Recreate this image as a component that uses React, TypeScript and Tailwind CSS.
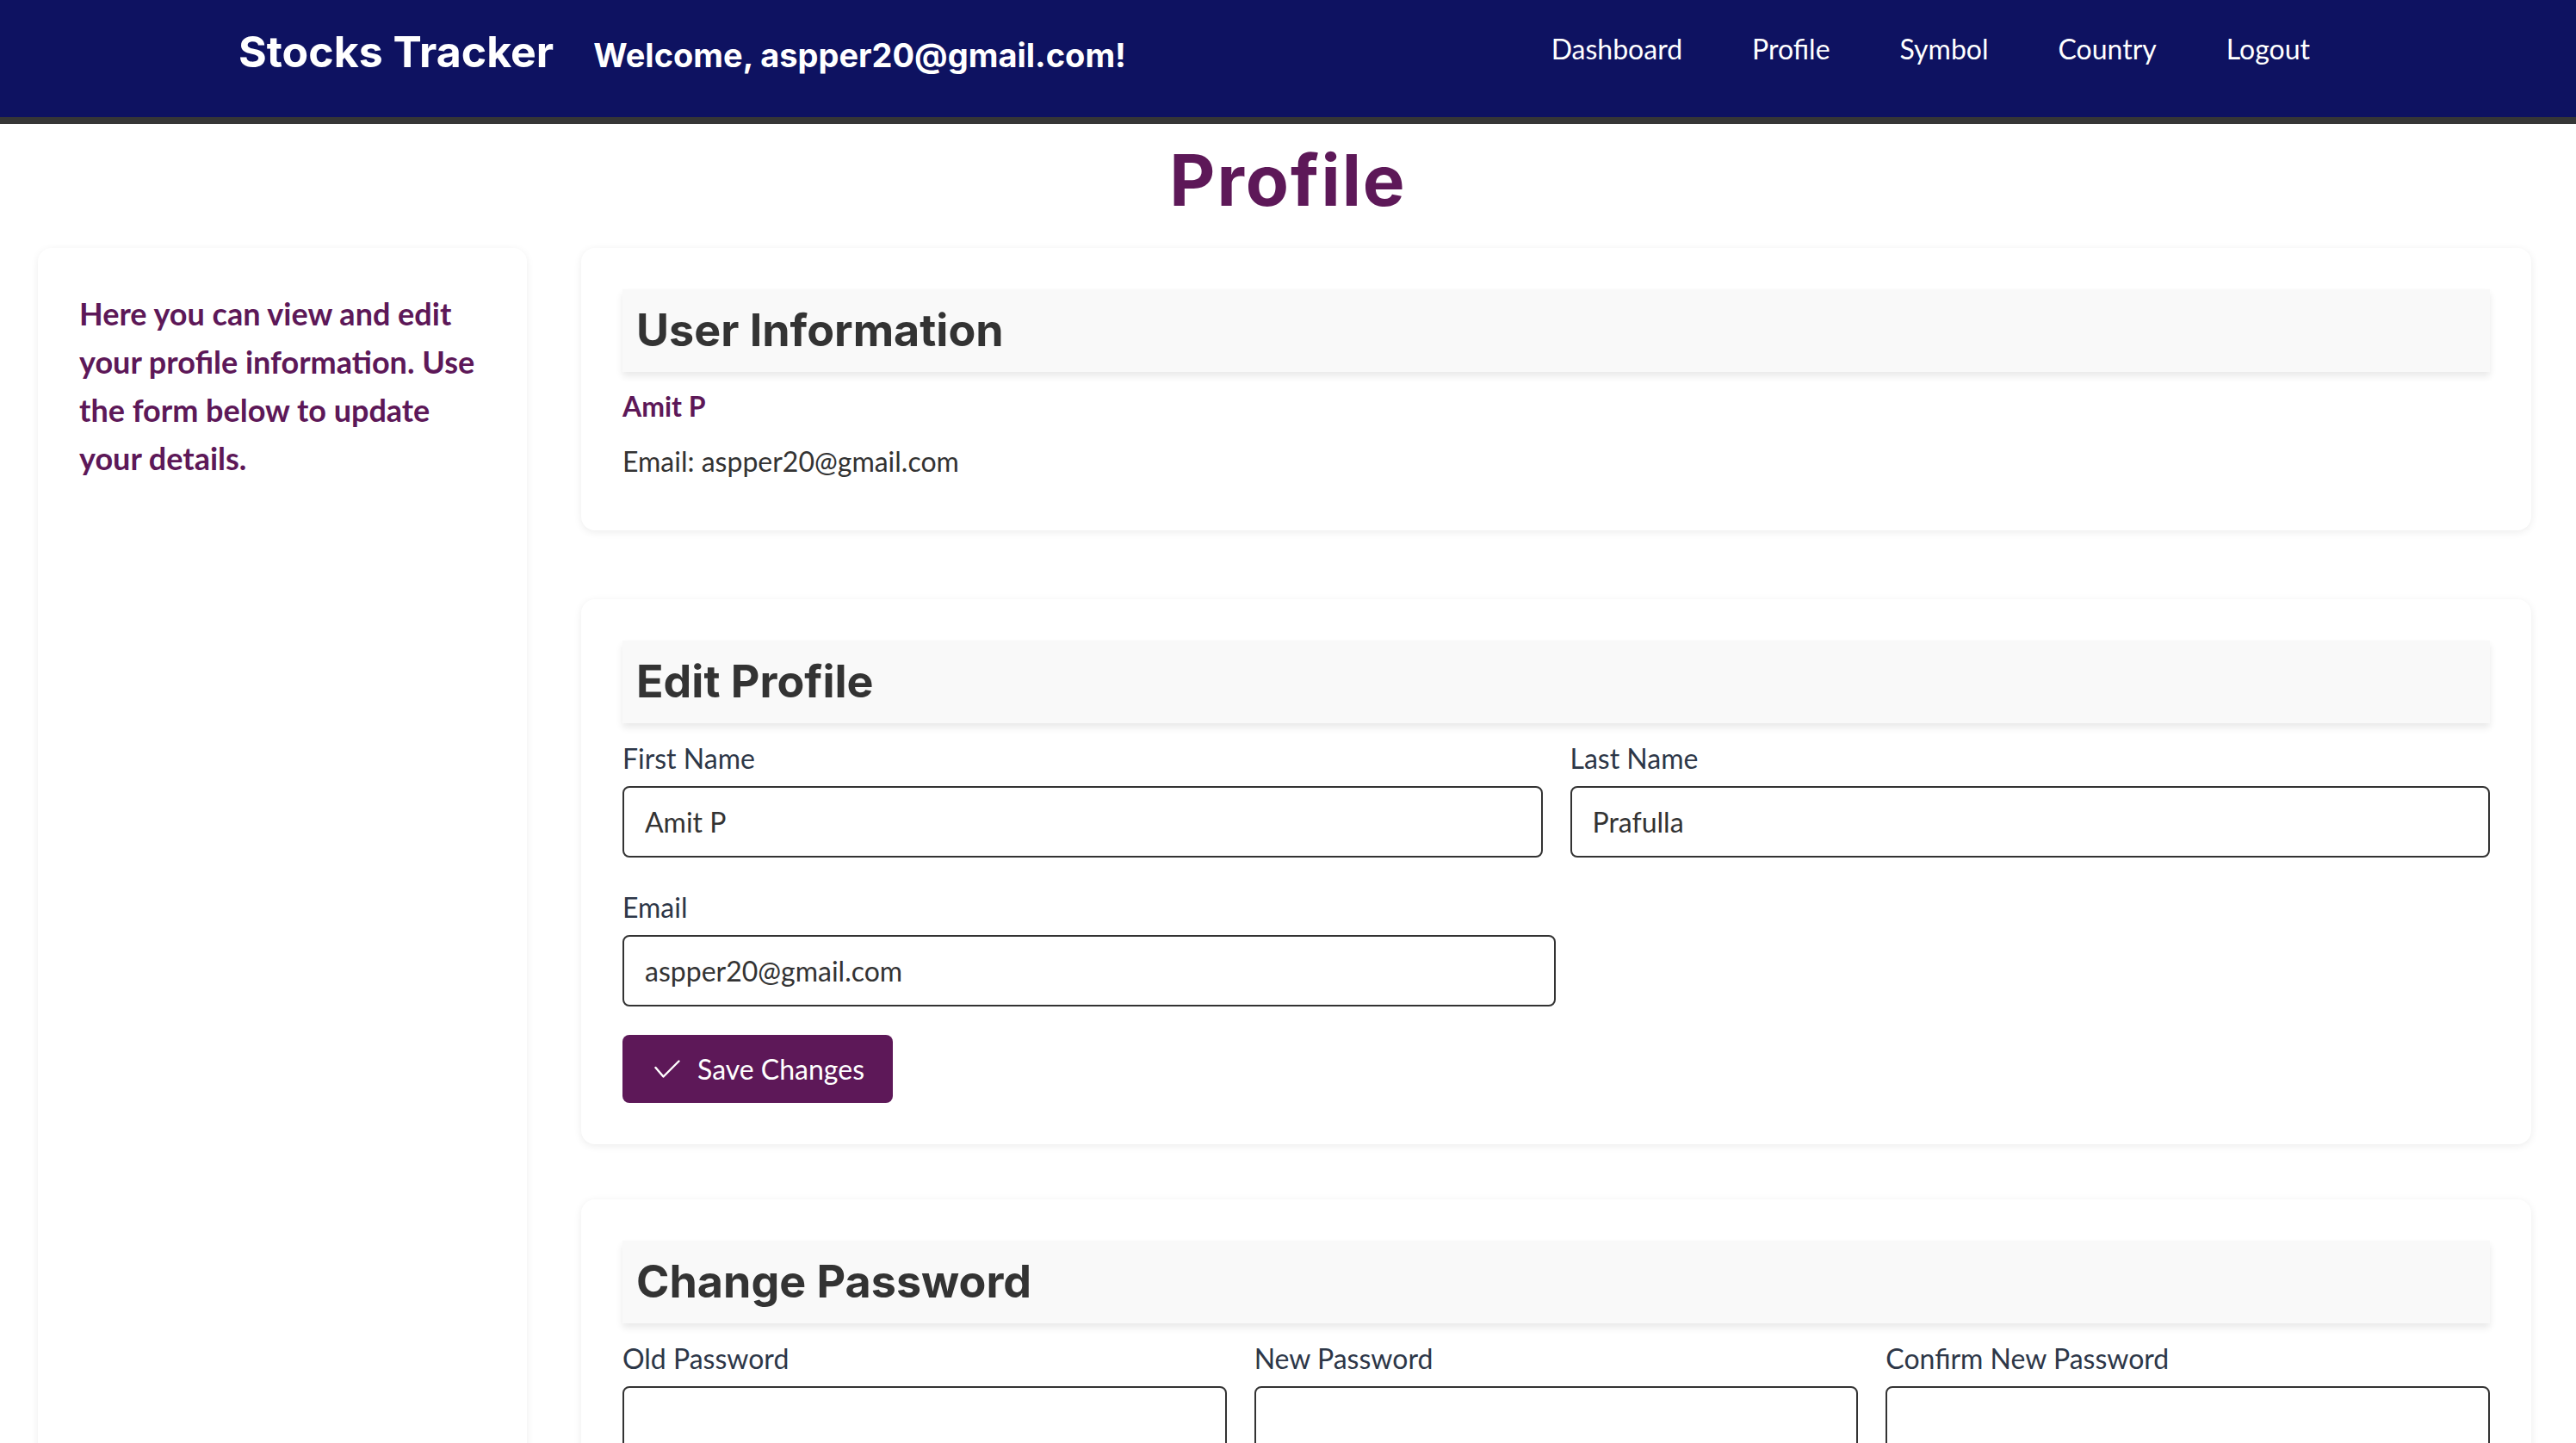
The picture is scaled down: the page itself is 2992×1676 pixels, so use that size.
import React from "react";

const heading = "font-['Inter','Open_Sans',sans-serif]";

function SectionHeader({ title }: { title: string }) {
  return (
    <div className="flex h-[96px] items-center bg-[#f9f9f9] pl-[16px] shadow-[0_5px_8px_rgba(0,0,0,0.09)]">
      <h2 className={`${heading} text-[52px] font-bold leading-none text-[#333333]`}>{title}</h2>
    </div>
  );
}

function Field({ label, value, type = "text" }: { label: string; value?: string; type?: string }) {
  return (
    <label className="flex flex-col">
      <span className="mb-[8px] text-[32px] leading-[48px] text-[#2d3748]">{label}</span>
      <input
        type={type}
        defaultValue={value}
        className="h-[83px] w-full rounded-[8px] border-2 border-[#333333] px-[24px] text-[32px] text-[#333333] outline-none"
      />
    </label>
  );
}

export default function App() {
  const links = ["Dashboard", "Profile", "Symbol", "Country", "Logout"];

  return (
    <div className="min-h-screen bg-white font-['Lato',sans-serif]">
      <header className="flex h-[144px] items-start border-b-[8px] border-[#363636] bg-[#0e1261] pl-[277px] pr-[309px]">
        <div className="flex items-baseline pt-[35px] leading-none">
          <span className={`${heading} text-[50px] font-bold text-white`}>Stocks Tracker</span>
          <span className={`${heading} ml-[46px] text-[38px] font-bold text-white`}>
            Welcome, aspper20@gmail.com!
          </span>
        </div>
        <nav className="ml-auto flex gap-[81px] pt-[41px] leading-none">
          {links.map((l) => (
            <a key={l} href="#" className="text-[32px] text-white">
              {l}
            </a>
          ))}
        </nav>
      </header>

      <h1 className={`${heading} mt-[25px] mb-[37px] text-center text-[82px] font-bold leading-none tracking-[2px] text-[#5d1858]`}>
        Profile
      </h1>

      <div className="flex gap-[63px] pl-[44px] pr-[52px]">
        <aside className="w-[568px] shrink-0 rounded-2xl bg-white p-[48px] shadow-[0_2px_10px_rgba(0,0,0,0.07)]">
          <p className="text-[36px] font-bold leading-[56px] text-[#5d1858]">
            Here you can view and edit your profile information. Use the form below to update your details.
          </p>
        </aside>

        <main className="flex flex-1 flex-col">
          <section className="rounded-2xl bg-white p-[48px] shadow-[0_2px_10px_rgba(0,0,0,0.08)]">
            <SectionHeader title="User Information" />
            <p className="mt-[16px] text-[32px] font-bold leading-[48px] text-[#5d1858]">Amit P</p>
            <p className="mt-[16px] mb-[8px] text-[32px] leading-[48px] text-[#333333]">Email: aspper20@gmail.com</p>
          </section>

          <section className="mt-[80px] rounded-2xl bg-white p-[48px] shadow-[0_2px_10px_rgba(0,0,0,0.08)]">
            <SectionHeader title="Edit Profile" />
            <div className="mt-[17px] grid grid-cols-2 gap-[32px]">
              <Field label="First Name" value="Amit P" />
              <Field label="Last Name" value="Prafulla" />
            </div>
            <div className="mt-[34px] w-[1084px]">
              <Field label="Email" value="aspper20@gmail.com" type="email" />
            </div>
            <button className="mt-[33px] flex h-[79px] items-center gap-[20px] rounded-[8px] bg-[#5d1858] pl-[37px] pr-[33px] text-[32px] text-white">
              <svg width="30" height="21" viewBox="0 0 30 21" fill="none" stroke="white" strokeWidth="2.4" strokeLinecap="round" strokeLinejoin="round">
                <path d="M1.5 9 L10.5 19.5 L28.5 1.5" />
              </svg>
              Save Changes
            </button>
          </section>

          <section className="mt-[64px] mb-[64px] rounded-2xl bg-white p-[48px] shadow-[0_2px_10px_rgba(0,0,0,0.08)]">
            <SectionHeader title="Change Password" />
            <div className="mt-[17px] grid grid-cols-3 gap-[32px]">
              <Field label="Old Password" type="password" />
              <Field label="New Password" type="password" />
              <Field label="Confirm New Password" type="password" />
            </div>
            <button className="mt-[33px] flex h-[79px] items-center gap-[20px] rounded-[8px] bg-[#5d1858] px-[36px] text-[32px] text-white">
              Change Password
            </button>
          </section>
        </main>
      </div>
    </div>
  );
}
